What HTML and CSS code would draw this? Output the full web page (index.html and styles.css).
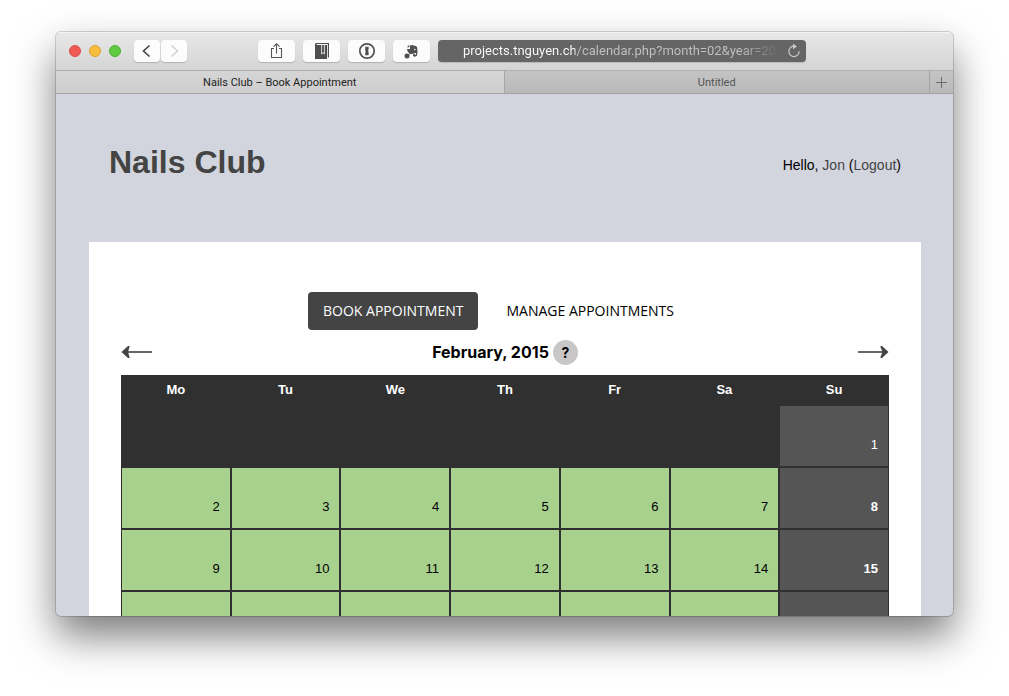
FILE: index.html
```html
<!DOCTYPE html>
<html lang="en">
<head>
<meta charset="utf-8">
<title>Nails Club – Book Appointment</title>
<link rel="stylesheet" href="styles.css">
</head>
<body>
<div class="window">
  <div class="toolbar">
    <div class="lights">
      <button class="light light-close" aria-label="Close"></button>
      <button class="light light-min" aria-label="Minimize"></button>
      <button class="light light-max" aria-label="Zoom"></button>
    </div>
    <div class="history">
      <button class="tool tool-small" aria-label="Back"><svg width="26" height="22" viewBox="0 0 26 22"><path d="M15.500 5.500 L9.500 11 L15.500 16.500" fill="none" stroke="#444" stroke-width="1.600"/></svg></button>
      <button class="tool tool-small" aria-label="Forward" disabled><svg width="26" height="22" viewBox="0 0 26 22"><path d="M10.500 5.500 L16.500 11 L10.500 16.500" fill="none" stroke="#d0d0d0" stroke-width="1.400"/></svg></button>
    </div>
    <div class="extensions">
      <button class="tool" aria-label="Share"><svg width="37" height="22" viewBox="0 0 37 22"><path d="M16 8.500h-2.500v9h10v-9H21M18.500 13.500V4M15.500 6.700l3-3 3 3" fill="none" stroke="#555" stroke-width="1.100"/></svg></button>
      <button class="tool" aria-label="Bookmark"><svg width="37" height="22" viewBox="0 0 37 22"><path d="M12 4.500C12 3.500 12.700 3 13.500 3H26v14.500h-1.200V4H13.800v1H24v14H12z" fill="#4f4f4f"/><path d="M18.600 5v9l1.400-1.300 1.400 1.300V5" fill="none" stroke="#fcfcfc" stroke-width=".800"/></svg></button>
      <button class="tool" aria-label="Password manager"><svg width="37" height="22" viewBox="0 0 37 22"><circle cx="19" cy="11" r="7.200" fill="none" stroke="#505050" stroke-width="1.700"/><path d="M17.200 6.800h3.400v3l-.7.900.7.900v3.600h-3.400v-3l.7-.9-.7-.9z" fill="#505050"/></svg></button>
      <button class="tool" aria-label="Web clipper"><svg width="37" height="22" viewBox="0 0 37 22"><path d="M17 5.500c1.300-.8 3-.9 4 .2 1.300-.1 2.700.4 3.100 1.500.6 3.500.5 6.500-.2 8.400-.5 1.500-3.900 1.600-4-.3 0-1.500 2-1.600 2-.5h1v-1.700c-1.600-.4-2 .9-3.700.8-3 .1-4.700-1.600-5.200-5h3z" fill="#505050"/><path d="M16.300 4.800v2.400h-2.500z" fill="#505050"/><circle cx="21.800" cy="9.500" r=".8" fill="#fcfcfc"/><circle cx="14" cy="16" r="2.500" fill="#505050"/><path d="M15 15l3-2" stroke="#505050" stroke-width="1"/></svg></button>
    </div>
    <div class="address">
      <input class="url" type="text" aria-label="Address" value="projects.tnguyen.ch/calendar.php?month=02&amp;year=2015">
      <button class="reload" aria-label="Reload"><svg width="14" height="16" viewBox="0 0 14 16"><path d="M6.500 3.200A5.200 5.200 0 1 0 12.200 8.300" fill="none" stroke="#c8c8c8" stroke-width="1.200"/><path d="M6 .5l4 2.900-4 2.900z" fill="#c8c8c8"/></svg></button>
    </div>
  </div>
  <div class="tabs">
    <button class="tab tab-current">Nails Club – Book Appointment</button>
    <button class="tab">Untitled</button>
    <button class="tab-add" aria-label="New tab"><svg width="11" height="11" viewBox="0 0 11 11"><path d="M5.500 0v11M0 5.500h11" stroke="#6c6c6c"/></svg></button>
  </div>
  <div class="page">
    <header class="header">
      <h1 class="brand">Nails Club</h1>
      <p class="greeting">Hello, <a class="link" href="#profile">Jon</a> (<a class="link" href="#logout">Logout</a>)</p>
    </header>
    <main class="card">
      <nav class="menu">
        <a class="menu-item menu-item-active" href="#book">BOOK APPOINTMENT</a>
        <a class="menu-item" href="#manage">MANAGE APPOINTMENTS</a>
      </nav>
      <div class="month">
        <a class="arrow" href="#previous" aria-label="Previous month"><svg width="31" height="12" viewBox="0 0 31 12"><path d="M5 6h26" stroke="#555" stroke-width="1.800"/><path d="M0.500 6L7 0h1.500v1L7 6l1.500 5v1H7z" fill="#444"/></svg></a>
        <div class="month-title">
          <h2 class="month-name">February, 2015</h2>
          <button class="help">?</button>
        </div>
        <a class="arrow" href="#next" aria-label="Next month"><svg width="31" height="12" viewBox="0 0 31 12"><path d="M0 6h26" stroke="#555" stroke-width="1.800"/><path d="M30.500 6L24 0h-1.500v1L24.500 6l-2 5v1H24z" fill="#444"/></svg></a>
      </div>
      <table class="calendar">
        <thead>
          <tr><th>Mo</th><th>Tu</th><th>We</th><th>Th</th><th>Fr</th><th>Sa</th><th>Su</th></tr>
        </thead>
        <tbody>
          <tr><td></td><td></td><td></td><td></td><td></td><td></td><td class="closed">1</td></tr>
          <tr><td class="open">2</td><td class="open">3</td><td class="open">4</td><td class="open">5</td><td class="open">6</td><td class="open">7</td><td class="closed upcoming">8</td></tr>
          <tr><td class="open">9</td><td class="open">10</td><td class="open">11</td><td class="open">12</td><td class="open">13</td><td class="open">14</td><td class="closed upcoming">15</td></tr>
          <tr><td class="open"></td><td class="open"></td><td class="open"></td><td class="open"></td><td class="open"></td><td class="open"></td><td class="closed"></td></tr>
        </tbody>
      </table>
    </main>
  </div>
</div>
</body>
</html>
```

FILE: styles.css
```css
* { box-sizing: border-box; }

body {
  margin: 0;
  height: 100vh;
  padding: 32px 56px 80px;
  background: #fff;
  color: #000;
  font-family: "Liberation Sans", Arial, sans-serif;
  overflow: hidden;
}

button { border: 0; margin: 0; padding: 0; background: none; font: inherit; color: inherit; }
svg { display: block; }

.window {
  height: 100%;
  display: flex;
  flex-direction: column;
  overflow: hidden;
  border-radius: 5px;
  background: #d2d5dd;
  box-shadow: 0 0 0 1px rgba(0, 0, 0, .16), 0 20px 40px rgba(0, 0, 0, .52);
}

.toolbar {
  flex: none;
  display: flex;
  align-items: center;
  height: 39px;
  padding: 0 147px 0 13px;
  background: linear-gradient(#e8e8e8, #d5d5d5);
  border-bottom: 1px solid #b0b0b0;
  box-shadow: inset 0 1px #f3f3f3;
}
.lights { display: flex; gap: 8px; }
.light { width: 12px; height: 12px; border-radius: 50%; border: 1px solid; }
.light-close { background: #f15b55; border-color: #dd4a45; }
.light-min { background: #f8bd3c; border-color: #dfa133; }
.light-max { background: #5fcb41; border-color: #4cae33; }
.history { display: flex; gap: 1px; margin-left: 13px; }
.extensions { display: flex; gap: 8px; margin-left: 71px; }
.tool {
  width: 37px;
  height: 22px;
  border-radius: 4px;
  background: #fcfcfc;
  box-shadow: 0 1px 1px rgba(0, 0, 0, .18);
}
.tool-small { width: 26px; }
.address {
  flex: 1;
  min-width: 0;
  display: flex;
  align-items: center;
  height: 22px;
  margin-left: 8px;
  padding: 0 5px 0 25px;
  border-radius: 4px;
  background: #656565;
  box-shadow: 0 1px 1px rgba(0, 0, 0, .15);
}
.url {
  flex: 1;
  min-width: 0;
  height: 22px;
  margin: 0 12px 0 0;
  border: 0;
  padding: 0;
  outline: 0;
  font: 13px/22px Roboto, sans-serif;
  color: transparent;
  background: linear-gradient(90deg, #fff 112px, #c2c2c2 112px, #c2c2c2 276px, #656565 316px);
  -webkit-background-clip: text;
  background-clip: text;
}

.tabs {
  flex: none;
  display: flex;
  height: 23px;
  background: linear-gradient(#c4c4c4, #b9b9b9);
  border-bottom: 1px solid #a3a3a3;
  color: #555;
}
.tab { flex: 1; padding-top: 1px; font: 11px/20px Roboto, sans-serif; }
.tab-current {
  flex: 0 0 50%;
  background: linear-gradient(#d5d5d5, #cecece);
  border-right: 1px solid #a6a6a6;
  color: #222;
}
.tab-add {
  flex: none;
  display: flex;
  align-items: center;
  justify-content: center;
  width: 24px;
  border-left: 1px solid #a3a3a3;
}

.page { flex: 1; min-height: 0; overflow: hidden; padding: 0 32px 0 33px; }
.header {
  display: flex;
  align-items: center;
  justify-content: space-between;
  height: 148px;
  padding: 0 20px 12px;
}
.brand { margin: 0; font-size: 32px; line-height: 40px; color: #444; }
.greeting { margin: 0; padding-top: 6px; font-size: 14px; line-height: 20px; }
.link { color: #444; text-decoration: none; }

.card { background: #fff; padding: 50px 32px; }
.menu { display: flex; justify-content: center; }
.menu-item {
  margin-right: 13px;
  padding: 9px 15px;
  border-radius: 4px;
  font: 14px/20px "Open Sans", sans-serif;
  color: #000;
  text-decoration: none;
}
.menu-item-active { background: #444; color: #fff; }

.month { display: flex; align-items: center; justify-content: space-between; height: 45px; padding-bottom: 1px; }
.month-title { display: flex; align-items: center; gap: 4px; }
.month-name { margin: 0; font: 700 16px/24px Inter, sans-serif; }
.help {
  width: 25px;
  height: 25px;
  border-radius: 50%;
  background: #c8c6c7;
  color: #000;
  font: 700 14px/25px Inter, sans-serif;
}

.calendar {
  width: 100%;
  table-layout: fixed;
  border-collapse: separate;
  border-spacing: 0;
  background: #303030;
  font-size: 13px;
  line-height: 20px;
}
.calendar th { height: 30px; padding: 0; color: #fff; }
.calendar td {
  height: 62px;
  padding: 0 10px 11px;
  border: 1px solid #303030;
  text-align: right;
  vertical-align: bottom;
}
.calendar .open { background: #a8d18d; }
.calendar .closed { background: #555; color: #fff; }
.calendar .upcoming { font-weight: 700; }
```
